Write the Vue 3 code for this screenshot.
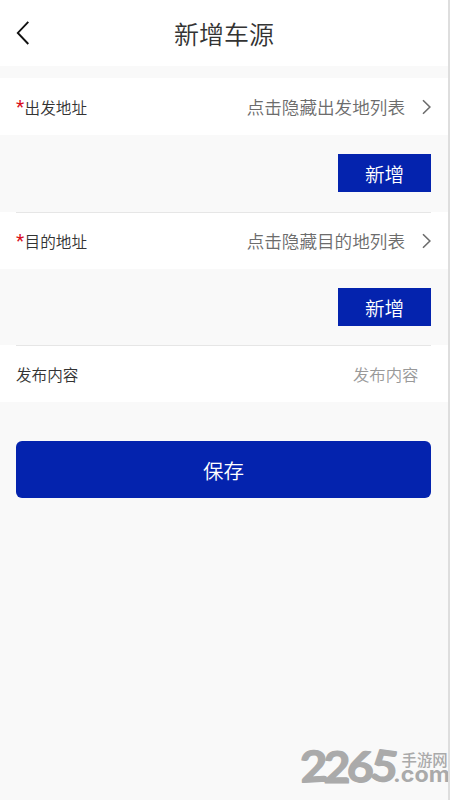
<script setup>
const groups = [
  { label: '出发地址', value: '点击隐藏出发地列表' },
  { label: '目的地址', value: '点击隐藏目的地列表' },
]
</script>

<template>
  <div class="page">
    <header class="header">
      <svg class="back" viewBox="0 0 14 26" width="14" height="26">
        <path d="M12.3 1.8 L1.8 12.9 L12.3 24" />
      </svg>
      <h1 class="title">新增车源</h1>
    </header>

    <main class="form">
      <section v-for="g in groups" :key="g.label" class="group">
        <div class="row">
          <span class="label"><span class="star">*</span>{{ g.label }}</span>
          <span class="value">{{ g.value }}</span>
          <svg class="arrow" viewBox="0 0 9 16" width="9" height="16">
            <path d="M1 1.3 L7.9 8 L1 14.7" />
          </svg>
        </div>
        <div class="action">
          <button class="add">新增</button>
        </div>
      </section>
      <div class="row divided">
        <span class="label">发布内容</span>
        <span class="placeholder">发布内容</span>
      </div>
    </main>

    <button class="save">保存</button>

    <svg class="watermark" viewBox="0 0 160 60" width="160" height="60">
      <g class="digits">
        <text x="10" y="42" textLength="28" lengthAdjust="spacingAndGlyphs" transform="rotate(-3 22 30)">2</text>
        <text x="33.5" y="42.5" textLength="27" lengthAdjust="spacingAndGlyphs">2</text>
        <text x="57" y="42" textLength="27" lengthAdjust="spacingAndGlyphs" transform="rotate(5 70 30)">6</text>
        <text x="80.5" y="41.5" textLength="27" lengthAdjust="spacingAndGlyphs" transform="rotate(8 94 30)">5</text>
      </g>
      <text class="site" x="111.5" y="25.5">手游网</text>
      <text class="domain" x="103" y="42" textLength="57" lengthAdjust="spacingAndGlyphs">.com</text>
    </svg>
  </div>
</template>

<style>
body {
  background: #f9f9f9;
}
</style>

<style scoped>
.page {
  position: relative;
  box-sizing: border-box;
  width: 450px;
  height: 800px;
  overflow: hidden;
  background: #f9f9f9;
  border-right: 2px solid #dedede;
  font-family: "Noto Sans CJK SC", sans-serif;
  font-weight: 350;
  color: #333;
}
.header {
  display: grid;
  grid-template-columns: 32px 1fr 32px;
  align-items: center;
  box-sizing: border-box;
  height: 66px;
  padding-bottom: 1px;
  background: #fff;
}
.back {
  margin-left: 16px;
}
.back path {
  fill: none;
  stroke: #111;
  stroke-width: 1.9;
}
.title {
  margin: 0;
  font-size: 25px;
  line-height: 36px;
  font-weight: inherit;
  text-align: center;
}
.form {
  padding-top: 12px;
}
.row {
  display: flex;
  align-items: center;
  box-sizing: border-box;
  height: 57px;
  padding: 0 17px 0 16px;
  background: #fff;
}
.group + .group .row,
.divided {
  background: linear-gradient(#e6e6e6, #e6e6e6) 16px 0 / 415px 1px no-repeat, #fff;
}
.label {
  display: flex;
  align-items: center;
  padding-top: 1px;
  font-size: 15.6px;
  line-height: 24px;
}
.star {
  width: 8.6px;
  font: 400 19px/20px "Roboto", sans-serif;
  color: #d9101c;
}
.value {
  margin-left: auto;
  font-size: 17.6px;
  color: #6c6c6c;
}
.arrow {
  margin-left: 17px;
}
.arrow path {
  fill: none;
  stroke: #6c6c6c;
  stroke-width: 1.6;
}
.action {
  display: flex;
  justify-content: flex-end;
  align-items: center;
  box-sizing: border-box;
  height: 77px;
  padding: 0 17px 1px 0;
}
.group + .group .action {
  height: 76px;
  padding-bottom: 0;
}
.add,
.save {
  border: 0;
  padding: 0;
  background: #0423ae;
  color: #fff;
  font-family: inherit;
  font-weight: inherit;
}
.add {
  width: 93px;
  height: 38px;
  font-size: 19.6px;
}
.placeholder {
  margin: 0 12.5px 0 auto;
  font-size: 16.4px;
  color: #999;
}
.save {
  display: block;
  width: 415px;
  height: 57px;
  margin: 39px 0 0 16px;
  border-radius: 6px;
  font-size: 20.5px;
}
.watermark {
  position: absolute;
  left: 290px;
  top: 740px;
  overflow: visible;
  fill: #aaa;
}
.digits {
  font: 700 43px "Lato", sans-serif;
  stroke: #aaa;
  stroke-width: 1.2;
  stroke-linejoin: round;
}
.site {
  font: 500 15.4px "Noto Sans CJK SC", sans-serif;
}
.domain {
  font: 700 21px "Inter", sans-serif;
}
</style>
